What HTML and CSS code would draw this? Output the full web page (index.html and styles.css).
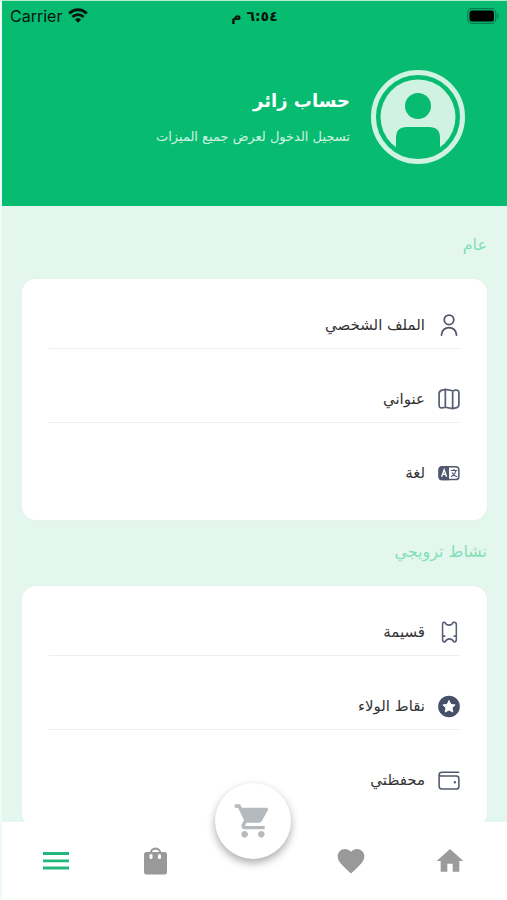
FILE: index.html
```html
<!DOCTYPE html>
<html lang="ar" dir="rtl">
<head>
<meta charset="utf-8">
<meta name="viewport" content="width=device-width, initial-scale=1">
<title>حساب زائر</title>
<link rel="stylesheet" href="styles.css">
</head>
<body>
<div class="app">
  <header class="top">
    <div class="status" dir="ltr">
      <div class="carrier">
        <span>Carrier</span>
        <svg width="20" height="15" viewBox="0 0 20 15" fill="none" stroke="#06150e" stroke-width="2.9"><path d="M1.2 5.6C6.2.5 13.800.5 18.800 5.600"/><path d="M4.400 9C7.600 5.800 12.400 5.800 15.600 9"/><path d="M6.900 11.600C8.600 9.700 11.400 9.700 13.100 11.600L10 14.800Z" fill="#06150e" stroke="none"/></svg>
      </div>
      <time dir="rtl">٦:٥٤ م</time>
      <svg class="battery" width="32" height="16" viewBox="0 0 32 16"><rect x=".7" y=".7" width="28" height="14.600" rx="4" fill="none" stroke="#087e4f" stroke-width="1.200"/><rect x="2.500" y="2.500" width="24.500" height="11" rx="2.500" fill="#000"/><path d="M30 5.500c2 .8 2 4.200 0 5z" fill="#087e4f"/></svg>
    </div>
    <div class="profile">
      <svg class="avatar" width="94" height="94" viewBox="0 0 94 94"><circle cx="47" cy="47" r="44.500" fill="none" stroke="#cff2e2" stroke-width="5"/><circle cx="47" cy="47" r="37.500" fill="#cff2e2"/><circle cx="47" cy="36" r="13" fill="#07bb70"/><path d="M25 78V68Q25 57 36 57H58Q69 57 69 68V78Q59 86 47 86T25 78Z" fill="#07bb70"/></svg>
      <div>
        <h1>حساب زائر</h1>
        <a class="login" href="#login">تسجيل الدخول لعرض جميع الميزات</a>
      </div>
    </div>
  </header>

  <main class="content">
    <h2>عام</h2>
    <ul class="card">
      <li><a href="#profile">
        <svg width="22" height="24" viewBox="0 0 24 24" fill="none" stroke="#505768" stroke-width="1.900" stroke-linecap="round"><circle cx="12" cy="6.300" r="5.200"/><path d="M3.800 23C3.800 12.200 20.200 12.200 20.200 23"/></svg>
        <span>الملف الشخصي</span></a></li>
      <li><a href="#address">
        <svg width="22" height="24" viewBox="0 0 24 24" fill="none" stroke="#596075" stroke-width="1.900" stroke-linejoin="round"><path d="M8 1.500L4.500 2.300Q1.200 3 1.200 6V18.500Q1.200 22 4.500 21.600L8 21L16 22.500L19.500 21.700Q22.800 21 22.800 18V5.500Q22.800 2 19.500 2.400L16 3ZM8 1.500V21M16 3V22.500"/></svg>
        <span>عنواني</span></a></li>
      <li><a href="#language">
        <svg width="22" height="24" viewBox="0 0 24 24"><rect x="1.200" y="5.200" width="21.600" height="14" rx="3.500" fill="#fff" stroke="#505870" stroke-width="1.600"/><path d="M12 4.500H4.500Q.5 4.500 .5 8.500V16Q.5 20 4.500 20H12Z" fill="#505870"/><path d="M4 16L6.700 8.500L9.400 16M5 13.500H8.400" fill="none" stroke="#fff" stroke-width="1.500"/><path d="M14 9.200H21M17.500 7.500V9.200M19.500 9.200Q18.500 14 14.200 16M15.200 11.500Q17 15 20.800 16" fill="none" stroke="#505870" stroke-width="1.200"/></svg>
        <span>لغة</span></a></li>
    </ul>

    <h2>نشاط ترويجي</h2>
    <ul class="card">
      <li><a href="#coupon">
        <svg width="22" height="24" viewBox="0 0 24 24" fill="none" stroke="#596075" stroke-width="1.700" stroke-linejoin="round"><path d="M6.500 1.300H7.500Q8.500 4.500 12 4.500T16.500 1.300H17.500Q20 1.300 20 4V20.300Q20 23 17.500 23Q15.700 19.500 12.500 19.500T7.500 23Q5 23 5 20.300V4Q5 1.300 6.500 1.300Z"/><path d="M5 16.500H8M17 16.500H20"/></svg>
        <span>قسيمة</span></a></li>
      <li><a href="#points">
        <svg width="22" height="24" viewBox="0 0 24 24"><circle cx="12" cy="12.500" r="11.800" fill="#465069"/><path d="M12 6L14 10.200L18.700 10.800L15.300 14L16.200 18.600L12 16.400L7.800 18.600L8.700 14L5.300 10.800L10 10.200Z" fill="#fff" stroke="#fff" stroke-width="1" stroke-linejoin="round"/></svg>
        <span>نقاط الولاء</span></a></li>
      <li><a href="#wallet">
        <svg width="22" height="24" viewBox="0 0 24 24" fill="none" stroke="#50586e" stroke-width="1.700" stroke-linecap="round"><path d="M22.500 3.500H4.500Q1.200 3.500 1.200 6.500V18.500Q1.200 21.800 4.200 21.800H20Q22.800 21.800 22.800 19V10.500Q22.800 7.600 20 7.600H3.500Q1.200 7.600 1.200 5.800"/><circle cx="18.400" cy="14.500" r=".5"/></svg>
        <span>محفظتي</span></a></li>
    </ul>
  </main>

  <nav class="tabs">
    <a href="#home" aria-label="الرئيسية"><svg width="32" height="32" viewBox="0 0 24 24" fill="#9b9b9b"><path d="M10 20v-6h4v6h5v-8h3L12 3 2 12h3v8z"/></svg></a>
    <a href="#favourites" aria-label="المفضلة"><svg width="32" height="32" viewBox="0 0 24 24" fill="#999"><path d="M12 21.350l-1.450-1.320C5.400 15.360 2 12.280 2 8.500 2 5.420 4.420 3 7.500 3c1.740 0 3.410.81 4.500 2.090C13.090 3.810 14.760 3 16.500 3 19.580 3 22 5.420 22 8.500c0 3.780-3.400 6.860-8.550 11.540L12 21.350z"/></svg></a>
    <a href="#cart" aria-label="السلة" class="cart-slot"><span class="cart"><svg width="40" height="40" viewBox="0 0 24 24" fill="#b5babf"><path d="M7 18c-1.100 0-1.990.9-1.990 2S5.900 22 7 22s2-.9 2-2-.9-2-2-2zM1 2v2h2l3.600 7.590-1.350 2.450c-.16.280-.25.610-.25.960 0 1.100.9 2 2 2h12v-2H7.420c-.14 0-.25-.11-.25-.25l.03-.12.9-1.630h7.450c.75 0 1.410-.41 1.750-1.030l3.580-6.490A1 1 0 0 0 20 4H5.210l-.94-2H1zm16 16c-1.100 0-1.990.9-1.990 2s.89 2 1.990 2 2-.9 2-2-.9-2-2-2z"/></svg></span></a>
    <a href="#orders" aria-label="الطلبات"><svg width="32" height="32" viewBox="0 0 32 32"><path d="M11.500 9C11.500 1.800 21.500 1.800 21.500 9" fill="none" stroke="#999" stroke-width="2.200"/><rect x="5" y="7" width="23" height="22.500" rx="2.500" fill="#999"/><rect x="10.500" y="9" width="3" height="5" rx="1.500" fill="#fff"/><rect x="19" y="9" width="3" height="5" rx="1.500" fill="#fff"/></svg></a>
    <a href="#menu" aria-label="القائمة" aria-current="page"><svg width="32" height="32" viewBox="0 0 32 32" stroke="#20b77a" stroke-width="2.800"><path d="M3 8.500H29M3 15.800H29M3 23H29"/></svg></a>
  </nav>
</div>
</body>
</html>
```
FILE: styles.css
```css
* {
  box-sizing: border-box;
}

body {
  margin: 0;
  background: #fff;
  color: #333;
  font-family: "DejaVu Sans", sans-serif;
}

a {
  color: inherit;
  text-decoration: none;
}

svg {
  display: block;
  flex: none;
}

.app {
  display: flex;
  flex-direction: column;
  height: 100vh;
  border-top: 1px solid #b0ebd2;
  border-left: 2px solid #effbf6;
}

.top {
  background: #07bb70;
  padding-bottom: 42px;
}

.status {
  display: grid;
  grid-template-columns: 1fr auto 1fr;
  align-items: center;
  height: 29px;
  padding: 0 8px;
  color: #06150e;
  font-size: 16px;
}

.carrier {
  display: flex;
  align-items: center;
  gap: 6px;
  font-family: Inter, sans-serif;
}

.status time {
  font-size: 14px;
  font-weight: bold;
}

.battery {
  justify-self: end;
}

.profile {
  display: flex;
  align-items: center;
  gap: 21px;
  padding: 40px 42px 0;
}

h1 {
  margin: 0 0 8px;
  color: #fff;
  font-size: 18px;
  line-height: 32px;
}

.login {
  display: block;
  color: #cff2e2;
  font-size: 13px;
  line-height: 24px;
}

.content {
  flex: 1;
  min-height: 0;
  overflow: hidden;
  padding: 27px 20px 0;
  background: #e3f7ee;
}

h2 {
  margin: 0 0 22px;
  color: #82dfb8;
  font-size: 16px;
  font-weight: normal;
  line-height: 24px;
}

.card {
  display: flex;
  flex-direction: column;
  gap: 38px;
  margin: 0 0 20px;
  padding: 34px 27px 35px;
  border-radius: 14px;
  background: #fff;
  box-shadow: 0 0 3px #e6eeea;
  list-style: none;
}

.card li:not(:last-child) {
  padding-bottom: 11px;
  border-bottom: 1px solid #eee;
}

.card a {
  display: flex;
  align-items: center;
  gap: 13px;
  font-size: 15px;
  line-height: 24px;
}

.tabs {
  display: flex;
  height: 78px;
  padding: 0 8px 0 5px;
  background: #fff;
}

.tabs a {
  display: flex;
  flex: 1;
  align-items: center;
  justify-content: center;
}

.tabs .cart-slot {
  position: relative;
}

.cart {
  position: absolute;
  top: -39px;
  display: flex;
  align-items: center;
  justify-content: center;
  width: 76px;
  height: 76px;
  border-radius: 50%;
  background: #fff;
  box-shadow: 0 4px 8px #0005;
}
```
